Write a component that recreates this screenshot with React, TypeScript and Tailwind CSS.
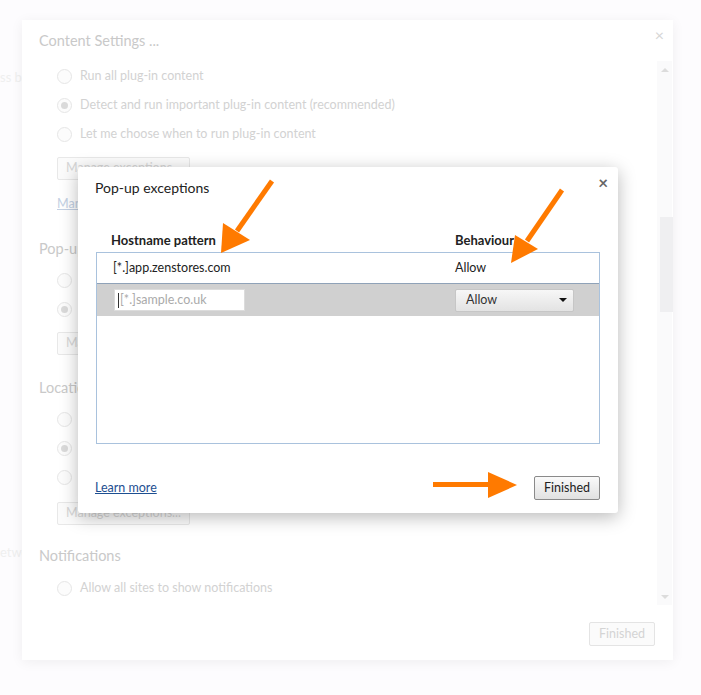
import React from 'react'

const font = { fontFamily: 'Lato, "Noto Sans", Arial, sans-serif' }

const Radio = ({ checked = false }: { checked?: boolean }) => (
  <span className="flex h-[15px] w-[15px] shrink-0 items-center justify-center rounded-full border border-[#e6e6e6] bg-[#fcfcfc]">
    {checked && <span className="h-[7px] w-[7px] rounded-full bg-[#dadada]" />}
  </span>
)

const RadioRow = ({ label, checked }: { label: string; checked?: boolean }) => (
  <div className="flex h-[29px] items-center gap-[8px] pl-[35px]">
    <Radio checked={checked} />
    <span className="text-[12.5px] text-[#d2d2d2]">{label}</span>
  </div>
)

const FadedButton = ({ label, className = '' }: { label: string; className?: string }) => (
  <div className={`ml-[35px] flex h-[23px] w-[133px] items-center justify-center rounded-[2px] border border-[#e8e8e8] bg-[#fbfbfb] text-[12.5px] text-[#d6d6d6] ${className}`}>
    {label}
  </div>
)

const Heading = ({ label, className = '' }: { label: string; className?: string }) => (
  <div className={`h-[20px] pl-[17px] text-[14.5px] leading-[20px] text-[#c9c9c9] ${className}`}>{label}</div>
)

const ContentSettings = () => (
  <div className="relative ml-[22px] mt-[20px] h-[640px] w-[651px] bg-white shadow-[0_2px_12px_rgba(0,0,0,0.06)]">
    <div className="pt-[11px]">
      <Heading label="Content Settings ..." />
    </div>
    <span className="absolute right-[9px] top-[7px] text-[16px] leading-[16px] text-[#d6d6d6]">×</span>

    <div className="mt-[10px] flex h-[544px]">
      <div className="flex-1 pt-[1px]">
        <RadioRow label="Run all plug-in content" />
        <RadioRow label="Detect and run important plug-in content (recommended)" checked />
        <RadioRow label="Let me choose when to run plug-in content" />
        <FadedButton label="Manage exceptions..." className="mt-[8px]" />
        <div className="ml-[35px] mt-[14px] h-[20px] text-[12.5px] leading-[20px] text-[#c3d0e3] underline">
          Manage individual plug-ins...
        </div>

        <Heading label="Pop-ups" className="mt-[25px]" />
        <div className="mt-[7px]">
          <RadioRow label="Allow all sites to show pop-ups" />
          <RadioRow label="Do not allow any site to show pop-ups (recommended)" checked />
        </div>
        <FadedButton label="Manage exceptions..." className="mt-[8px]" />

        <Heading label="Location" className="mt-[23px]" />
        <div className="mt-[7px]">
          <RadioRow label="Allow all sites to track your physical location" />
          <RadioRow label="Ask when a site tries to track your physical location (recommended)" checked />
          <RadioRow label="Do not allow any site to track your physical location" />
        </div>
        <FadedButton label="Manage exceptions..." className="mt-[10px]" />

        <Heading label="Notifications" className="mt-[21px]" />
        <div className="mt-[8px]">
          <RadioRow label="Allow all sites to show notifications" />
        </div>
      </div>

      {/* scrollbar */}
      <div className="mr-[1px] flex w-[15px] flex-col items-center bg-[#fafafb]">
        <span className="mt-[7px] h-0 w-0 border-x-[4px] border-b-[4px] border-x-transparent border-b-[#dcdcdc]" />
        <div className="ml-[4px] mt-[145px] h-[95px] w-[13px] bg-[#efeff1]" />
        <div className="flex-1" />
        <span className="mb-[6px] h-0 w-0 border-x-[4px] border-t-[4px] border-x-transparent border-t-[#dcdcdc]" />
      </div>
    </div>

    <div className="mt-[17px] flex justify-end pr-[18px]">
      <div className="flex h-[24px] w-[66px] items-center justify-center rounded-[2px] border border-[#e4e4e4] bg-[#fbfbfb] text-[12.5px] text-[#d4d4d4]">
        Finished
      </div>
    </div>
  </div>
)

const PopupExceptions = () => (
  <div className="absolute left-[78px] top-[167px] h-[346px] w-[540px] rounded-[3px] bg-white shadow-[0_4px_18px_rgba(0,0,0,0.28)]">
    <div className="pl-[17px] pt-[11px] text-[14px] leading-[20px] text-[#222]">Pop-up exceptions</div>
    <span className="absolute right-[10px] top-[7px] text-[17px] font-bold leading-[17px] text-[#666]">×</span>

    <div className="mt-[33px] flex h-[18px] px-[18px] text-[13px] font-bold leading-[18px] text-[#222]">
      <span className="w-[359px] pl-[15px]">Hostname pattern</span>
      <span>Behaviour</span>
    </div>

    <div className="mx-[18px] mt-[3px] h-[192px] border border-[#a9c2dd] bg-white">
      <div className="flex h-[31px] items-center border-b border-[#8fa2b8] text-[12.5px] text-[#222]">
        <span className="w-[358px] pl-[16px]">[*.]app.zenstores.com</span>
        <span>Allow</span>
      </div>
      <div className="flex h-[32px] items-center bg-[#d0d0d0]">
        <div className="w-[358px] pl-[17px]">
          <div className="flex h-[22px] w-[131px] items-center border border-[#dcdcdc] bg-white pl-[3px] text-[12.5px] text-[#aaa]">
            <span className="mr-[1px] h-[15px] w-[1px] bg-[#333]" />
            [*.]sample.co.uk
          </div>
        </div>
        <div className="flex h-[23px] w-[119px] items-center justify-between rounded-[2px] border border-[#c6c6c6] bg-gradient-to-b from-[#f7f7f7] to-[#e3e3e3] pl-[10px] pr-[6px] text-[12.5px] text-[#333]">
          <span>Allow</span>
          <span className="h-0 w-0 border-x-[4px] border-t-[4px] border-x-transparent border-t-[#111]" />
        </div>
      </div>
    </div>

    <div className="mt-[32px] flex items-center justify-between pl-[17px] pr-[18px]">
      <span className="text-[12.5px] text-[#1d4f91] underline">Learn more</span>
      <div className="flex h-[24px] w-[66px] items-center justify-center rounded-[2px] border border-[#8a8a8a] bg-gradient-to-b from-[#fafafa] to-[#e1e1e1] text-[12.5px] text-[#222]">
        Finished
      </div>
    </div>
  </div>
)

const Arrows = () => (
  <svg className="pointer-events-none absolute left-0 top-0" width="701" height="695" viewBox="0 0 701 695">
    <g fill="#ff7a00" stroke="#ff7a00">
      <line x1="272" y1="181" x2="237" y2="231" strokeWidth="5" />
      <polygon points="223,223 250,240 221,253" strokeWidth="0" />
      <line x1="562" y1="190" x2="527" y2="241" strokeWidth="5" />
      <polygon points="515,235 538,249 511,263" strokeWidth="0" />
      <line x1="433" y1="484.5" x2="490" y2="484.5" strokeWidth="5" />
      <polygon points="488,472 517,485 488,498" strokeWidth="0" />
    </g>
  </svg>
)

export default function App() {
  return (
    <div className="relative h-[695px] w-[701px] overflow-hidden bg-[#fdfcfe]" style={font}>
      {/* faint page text behind the overlay */}
      <div className="absolute left-0 top-[68px] text-[13px] text-[#efefef]">ss bandwidth</div>
      <div className="absolute left-0 top-[543px] text-[13px] text-[#efefef]">etwork</div>
      <div className="relative flex flex-col">
        <ContentSettings />
      </div>
      <PopupExceptions />
      <Arrows />
    </div>
  )
}
